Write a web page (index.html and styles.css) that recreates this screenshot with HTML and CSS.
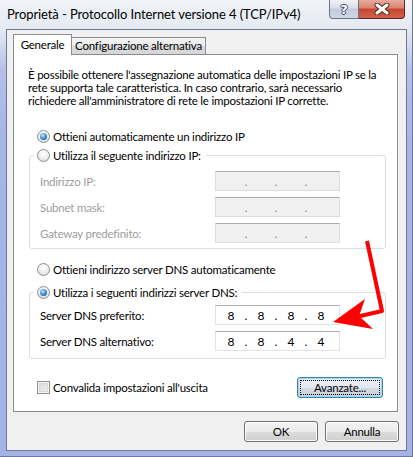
FILE: index.html
```html
<!DOCTYPE html>
<html lang="it">
<head>
    <meta charset="UTF-8">
    <title>Proprietà - Protocollo Internet versione 4 (TCP/IPv4)</title>
    <link rel="stylesheet" href="styles.css">
</head>
<body>
    <div class="window">
        <div class="titlebar">
            <span class="title">Proprietà - Protocollo Internet versione 4 (TCP/IPv4)</span>
            <div class="caption-buttons">
                <div class="cap-btn help">?</div>
                <div class="cap-btn close">
                    <svg width="16" height="12" viewBox="0 0 16 12">
                        <path d="M3 2 L13 10 M13 2 L3 10" stroke="#4a2a24" stroke-width="5" stroke-linecap="round"/>
                        <path d="M3 2 L13 10 M13 2 L3 10" stroke="#fff" stroke-width="3" stroke-linecap="round"/>
                    </svg>
                </div>
            </div>
        </div>

        <div class="client">
            <div class="tabs">
                <div class="tab active">Generale</div>
                <div class="tab">Configurazione alternativa</div>
            </div>

            <div class="panel">
                <p class="intro">È possibile ottenere l'assegnazione automatica delle impostazioni IP se la<br>rete supporta tale caratteristica. In caso contrario, sarà necessario<br>richiedere all'amministratore di rete le impostazioni IP corrette.</p>

                <div class="option first"><span class="radio on"></span>Ottieni automaticamente un indirizzo IP</div>

                <fieldset class="group ip-group">
                    <legend><span class="radio"></span>Utilizza il seguente indirizzo IP:</legend>
                    <div class="fields disabled">
                        <span class="label">Indirizzo IP:</span>
                        <div class="ip off"><span class="seg"></span><span class="dot">.</span><span class="seg"></span><span class="dot">.</span><span class="seg"></span><span class="dot">.</span><span class="seg"></span></div>
                        <span class="label">Subnet mask:</span>
                        <div class="ip off"><span class="seg"></span><span class="dot">.</span><span class="seg"></span><span class="dot">.</span><span class="seg"></span><span class="dot">.</span><span class="seg"></span></div>
                        <span class="label">Gateway predefinito:</span>
                        <div class="ip off"><span class="seg"></span><span class="dot">.</span><span class="seg"></span><span class="dot">.</span><span class="seg"></span><span class="dot">.</span><span class="seg"></span></div>
                    </div>
                </fieldset>

                <div class="option dns-auto"><span class="radio"></span>Ottieni indirizzo server DNS automaticamente</div>

                <fieldset class="group dns-group">
                    <legend><span class="radio on"></span>Utilizza i seguenti indirizzi server DNS:</legend>
                    <div class="fields">
                        <span class="label">Server DNS preferito:</span>
                        <div class="ip"><span class="seg">8</span><span class="dot">.</span><span class="seg">8</span><span class="dot">.</span><span class="seg">8</span><span class="dot">.</span><span class="seg">8</span></div>
                        <span class="label">Server DNS alternativo:</span>
                        <div class="ip"><span class="seg">8</span><span class="dot">.</span><span class="seg">8</span><span class="dot">.</span><span class="seg">4</span><span class="dot">.</span><span class="seg">4</span></div>
                    </div>
                </fieldset>

                <div class="bottom-row">
                    <div class="option check"><span class="checkbox"></span>Convalida impostazioni all'uscita</div>
                    <button class="btn default"><span class="focus">Avanzate...</span></button>
                </div>
            </div>

            <div class="dialog-buttons">
                <button class="btn">OK</button>
                <button class="btn">Annulla</button>
            </div>
        </div>

        <!-- red annotation arrow drawn over the dialog -->
        <svg class="arrow" width="413" height="457" viewBox="0 0 413 457">
            <polyline points="367,241 382,311 356,317" fill="none" stroke="#f00" stroke-width="4" stroke-linejoin="round"/>
            <polygon points="333,322 365,299 359,316 373,329" fill="#f00"/>
        </svg>
    </div>
</body>
</html>
```

FILE: styles.css
```css
* {
    box-sizing: border-box;
}
body {
    margin: 0;
    font-family: 'Lato', sans-serif;
    font-size: 11.5px;
    letter-spacing: -0.22px;
    color: #000;
}
.window {
    position: relative;
    width: 413px;
    height: 457px;
    padding: 0 6px 6px;
    display: flex;
    flex-direction: column;
    background: linear-gradient(#f1f3f7 0, #e4e9f2 30px, #b4c0ea 70px, #a7b4e6 140px, #a5b2e6 100%);
    box-shadow: inset -1px 0 0 #6e7893, inset 0 -1px 0 #6e7893;
    overflow: hidden;
}
.titlebar {
    height: 29px;
    display: flex;
    align-items: flex-start;
    padding-left: 1px;
    padding-right: 2px;
}
.title {
    font-size: 13px;
    letter-spacing: -0.1px;
    line-height: 28px;
    white-space: nowrap;
}
.caption-buttons {
    margin-left: auto;
    display: flex;
}
.cap-btn {
    height: 19px;
    display: flex;
    align-items: center;
    justify-content: center;
    border: 1px solid #6b7487;
    border-top: none;
}
.help {
    width: 30px;
    border-radius: 0 0 0 4px;
    background: linear-gradient(#eef1f6, #d8dfea 45%, #c2cbdc 50%, #cfd7e6);
    color: #fff;
    font-family: 'DejaVu Sans', sans-serif;
    font-weight: bold;
    font-size: 13px;
    letter-spacing: 0;
    text-shadow: 1px 0 0 #3b4a63, -1px 0 0 #3b4a63, 0 1px 0 #3b4a63, 0 -1px 0 #3b4a63;
}
.close {
    width: 46px;
    border-left: none;
    border-color: #5b2a22;
    border-radius: 0 0 4px 0;
    background: linear-gradient(#e9aa9c, #d98270 45%, #c8432d 50%, #d2624c);
}
.client {
    flex: 1;
    background: #f0f0f0;
    border: 1px solid #6e7893;
    padding: 4px 8px 7px 6px;
}
.tabs {
    height: 20px;
    display: flex;
    align-items: flex-end;
}
.tab {
    height: 17px;
    width: 135px;
    border: 1px solid #898c95;
    border-bottom: none;
    background: linear-gradient(#f3f3f3, #ebebeb 50%, #dddddd 50%, #d6d6d6);
    text-align: center;
    line-height: 16px;
    white-space: nowrap;
}
.tab.active {
    position: relative;
    z-index: 1;
    width: 59px;
    height: 21px;
    margin-bottom: -1px;
    margin-right: -1px;
    background: #fff;
    line-height: 19px;
}
.panel {
    background: #fff;
    border: 1px solid #898c95;
    padding: 13px 11px 13px 15px;
}
.intro {
    margin: 0 0 0 -1px;
    line-height: 13px;
    white-space: nowrap;
}
.option {
    display: flex;
    align-items: center;
    height: 16px;
    padding-left: 8px;
    white-space: nowrap;
}
.option.first {
    margin-top: 21px;
}
.option.dns-auto {
    margin-top: 12px;
}
.radio {
    position: relative;
    flex: none;
    width: 13px;
    height: 13px;
    margin-right: 3px;
    border-radius: 50%;
    border: 1px solid #8e8f8f;
    background: radial-gradient(circle at 50% 35%, #ffffff 0, #ececec 55%, #cfcfcf 100%);
}
.radio.on::after {
    content: "";
    position: absolute;
    left: 2px;
    top: 2px;
    width: 7px;
    height: 7px;
    border-radius: 50%;
    background: radial-gradient(circle at 40% 35%, #c4e6fb 0, #3d8fd6 50%, #174a86 100%);
}
.checkbox {
    flex: none;
    width: 13px;
    height: 13px;
    margin-right: 3px;
    border: 1px solid #8e8f8f;
    background: linear-gradient(135deg, #d4d4d4, #f4f4f4);
    box-shadow: inset 0 0 0 1px #f4f4f4, inset 0 0 0 2px #d9d9d9;
}
.group {
    margin: 3px 0 0;
    min-width: 0;
    border: 1px solid #d5dfe5;
    border-radius: 3px;
    padding: 8px 0 5px 10px;
}
.group legend {
    display: flex;
    align-items: center;
    height: 16px;
    margin-left: -6px;
    padding: 0 5px 0 3px;
    white-space: nowrap;
}
.dns-group {
    margin-top: 7px;
    padding-top: 5px;
    padding-bottom: 7px;
}
.fields {
    display: grid;
    grid-template-columns: 175px 125px;
    grid-auto-rows: 20px;
    row-gap: 6px;
    align-items: center;
}
.fields.disabled .label {
    color: #9d9d9d;
}
.ip {
    height: 20px;
    display: flex;
    align-items: center;
    padding: 0 2px;
    background: #fff;
    border: 1px solid #dfe3e8;
    border-top-color: #abadb3;
    font-size: 12px;
    letter-spacing: 0;
}
.ip.off {
    background: #f0f0f0;
    border-color: #dadde3;
    border-top-color: #acacac;
    color: #7f80a6;
    font-size: 11px;
}
.seg {
    width: 26px;
    text-align: center;
}
.dot {
    width: 4px;
    text-align: center;
}
.bottom-row {
    margin-top: 18px;
    padding-right: 3px;
    display: flex;
    align-items: center;
    justify-content: space-between;
}
.btn {
    font: inherit;
    letter-spacing: inherit;
    color: #000;
    height: 21px;
    padding: 0;
    border: 1px solid #707070;
    border-radius: 3px;
    background: linear-gradient(#f2f2f2, #ebebeb 50%, #dddddd 50%, #cfcfcf);
    box-shadow: inset 0 0 0 1px #fcfcfc;
}
.btn.default {
    width: 86px;
    border-color: #3c7fb1;
    background: linear-gradient(#eaf0f5, #e2e8ee 50%, #d4dbe2 50%, #c8d0d8);
    box-shadow: inset 0 0 0 1px #9fd8f3;
}
.focus {
    display: block;
    margin: 2px;
    height: 15px;
    line-height: 14px;
    border: 1px dotted #000;
}
.dialog-buttons {
    margin-top: 9px;
    margin-right: -1px;
    display: flex;
    justify-content: flex-end;
    gap: 7px;
}
.dialog-buttons .btn {
    width: 74px;
}
.arrow {
    position: absolute;
    left: 0;
    top: 0;
    pointer-events: none;
}
```
